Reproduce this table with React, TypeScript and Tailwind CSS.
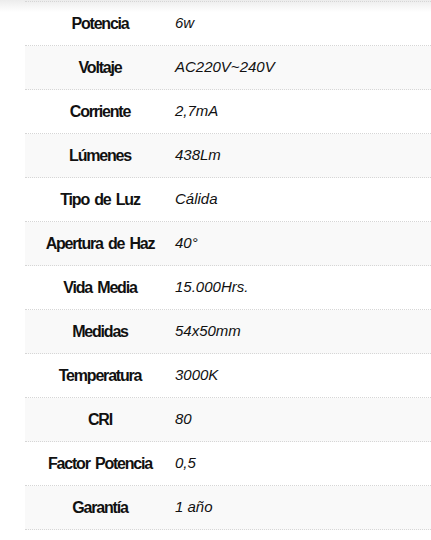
const specs: [string, string][] = [
  ['Potencia', '6w'],
  ['Voltaje', 'AC220V~240V'],
  ['Corriente', '2,7mA'],
  ['Lúmenes', '438Lm'],
  ['Tipo de Luz', 'Cálida'],
  ['Apertura de Haz', '40°'],
  ['Vida Media', '15.000Hrs.'],
  ['Medidas', '54x50mm'],
  ['Temperatura', '3000K'],
  ['CRI', '80'],
  ['Factor Potencia', '0,5'],
  ['Garantía', '1 año'],
]

export default function App() {
  return (
    <div className="min-h-[540px] w-[431px] bg-white bg-[linear-gradient(to_bottom,#ececec,#ffffff_12px)] pt-px pl-[25px]">
      <div className="border-t border-dotted border-[#d6d6d6]">
        {specs.map(([label, value], i) => (
          <div
            key={label}
            className={`flex h-[44px] items-center border-b border-dotted border-[#d6d6d6] ${
              i % 2 === 1 ? 'bg-[#f9f9f9]' : ''
            }`}
          >
            <div className="w-[150px] text-center text-[16px] font-bold tracking-[-1.2px] [word-spacing:2px] text-[#111] font-['Liberation_Sans',Arial,sans-serif]">
              {label}
            </div>
            <div className="text-[15px] italic text-[#111] font-['Liberation_Sans',Arial,sans-serif]">
              {value}
            </div>
          </div>
        ))}
      </div>
    </div>
  )
}
